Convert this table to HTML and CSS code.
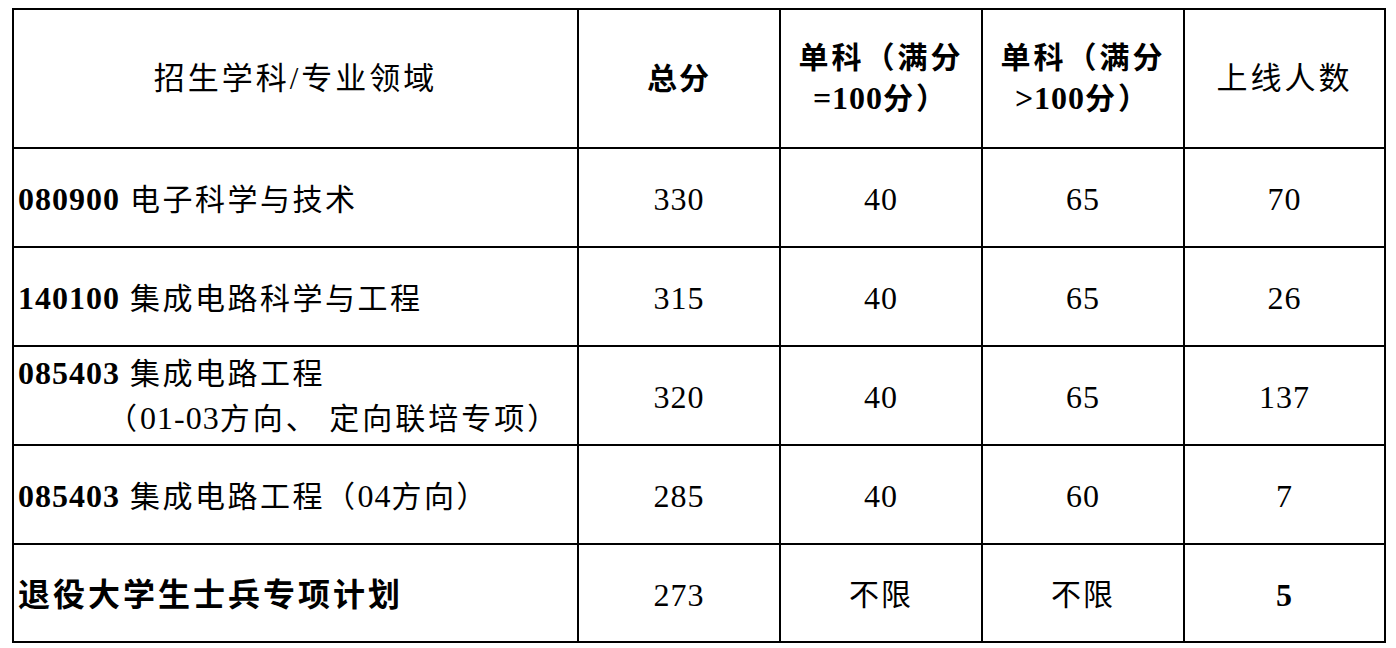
FILE: index.html
```html
<!DOCTYPE html>
<html lang="zh-CN">
<head>
<meta charset="utf-8">
<title>分数线</title>
<link rel="stylesheet" href="styles.css">
</head>
<body>
<div class="sheet">
  <div class="grid">
    <div class="cell head"><div class="wide">招生学科/专业领域</div></div>
    <div class="cell head bold"><div>总分</div></div>
    <div class="cell head bold"><div class="split">单科（满分<br><span class="dg">=100</span>分）</div></div>
    <div class="cell head bold"><div class="split">单科（满分<br><span class="dg">&gt;100</span>分）</div></div>
    <div class="cell head"><div class="wide">上线人数</div></div>

    <div class="cell name"><div class="line"><span class="code">080900</span> 电子科学与技术</div></div>
    <div class="cell num">330</div>
    <div class="cell num">40</div>
    <div class="cell num">65</div>
    <div class="cell num">70</div>

    <div class="cell name"><div class="line"><span class="code">140100</span> 集成电路科学与工程</div></div>
    <div class="cell num">315</div>
    <div class="cell num">40</div>
    <div class="cell num">65</div>
    <div class="cell num">26</div>

    <div class="cell name multi">
      <div class="line"><span class="code">085403</span> 集成电路工程</div>
      <div class="line indent">（<span class="dg">01-03</span>方向、 定向联培专项）</div>
    </div>
    <div class="cell num">320</div>
    <div class="cell num">40</div>
    <div class="cell num">65</div>
    <div class="cell num">137</div>

    <div class="cell name"><div class="line"><span class="code">085403</span> 集成电路工程（<span class="dg">04</span>方向）</div></div>
    <div class="cell num">285</div>
    <div class="cell num">40</div>
    <div class="cell num">60</div>
    <div class="cell num">7</div>

    <div class="cell name"><div class="line big">退役大学生士兵专项计划</div></div>
    <div class="cell num">273</div>
    <div class="cell num cn">不限</div>
    <div class="cell num cn">不限</div>
    <div class="cell num bold">5</div>
  </div>
</div>
</body>
</html>
```

FILE: styles.css
```css
html, body {
  margin: 0;
  padding: 0;
  background: #ffffff;
}

body {
  font-family: "Liberation Serif", "Noto Sans CJK SC", serif;
  font-size: 30px;
  color: #000000;
  letter-spacing: 2.5px;
}

.sheet {
  padding: 8px 0 0 12px;
}

.grid {
  display: grid;
  grid-template-columns: 565px 202px 202px 202px 201px;
  grid-template-rows: 139px 99px 99px 99px 99px 98px;
  width: 1372px;
  border-left: 2px solid #000;
  border-top: 2px solid #000;
}

.cell {
  border-right: 2px solid #000;
  border-bottom: 2px solid #000;
  display: flex;
  align-items: center;
  justify-content: center;
  text-align: center;
  line-height: 40px;
  white-space: nowrap;
}

.head {
  letter-spacing: 2px;
}

.head .wide {
  font-size: 31px;
  letter-spacing: 3px;
}

.head .split {
  letter-spacing: 3px;
}

.bold {
  font-weight: 700;
}

.name {
  justify-content: flex-start;
  text-align: left;
  padding-left: 4px;
  padding-top: 3px;
}

.multi {
  flex-direction: column;
  align-items: flex-start;
  justify-content: center;
  padding-top: 0;
}

.multi .line {
  line-height: 45px;
}

.multi .indent {
  padding-left: 89px;
  letter-spacing: 3px;
}

.code {
  font-weight: 700;
  font-size: 32px;
  letter-spacing: 1px;
}

.dg {
  font-size: 32px;
  letter-spacing: 1px;
}

.big {
  font-size: 32px;
  letter-spacing: 3px;
  font-weight: 700;
}

.num {
  font-size: 32px;
  letter-spacing: 1px;
  padding-top: 3px;
}

.num.cn {
  font-size: 30px;
  letter-spacing: 2px;
}
```
